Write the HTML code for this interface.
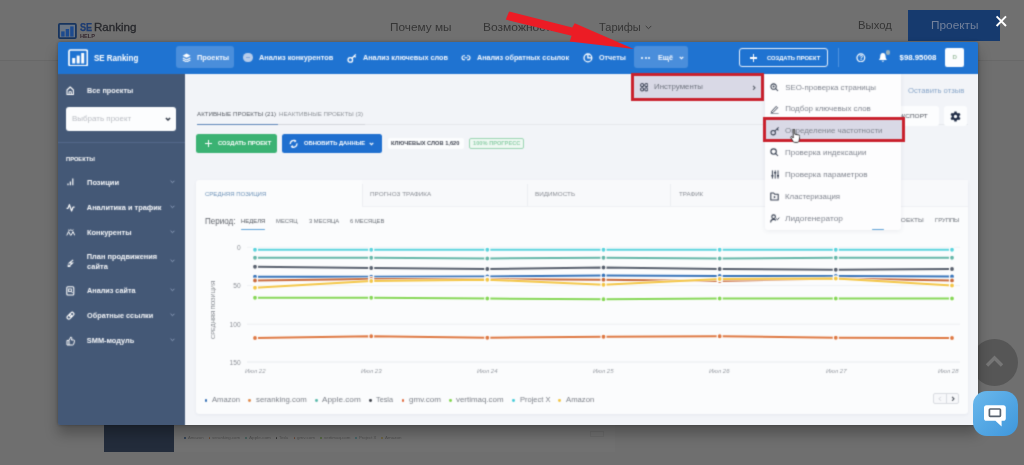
<!DOCTYPE html><html lang="ru"><head><meta charset="utf-8"><title>SE Ranking Help</title><style>
html,body{margin:0;padding:0;}
body{width:1024px;height:465px;overflow:hidden;position:relative;background:#6f6f6f;font-family:"Liberation Sans",sans-serif;}
div,span.t,svg{position:absolute;}
span.t{white-space:nowrap;display:block;}
#m{overflow:hidden;border-radius:2px;}
#mw{filter:url(#soft);}
</style></head><body><svg width="0" height="0" style="left:0;top:0;"><filter id="soft" x="0" y="0" width="100%" height="100%" color-interpolation-filters="sRGB"><feConvolveMatrix order="3" kernelMatrix="0.03 0.11 0.03 0.11 0.44 0.11 0.03 0.11 0.03" edgeMode="duplicate" preserveAlpha="false"/></filter></svg><div style="left:0.00px;top:0.00px;width:1024.00px;height:60.00px;background:#707070;"></div><div style="left:0.00px;top:60.00px;width:1024.00px;height:1.00px;background:#686868;"></div><svg style="left:58.20px;top:22.70px;" width="18.80" height="16.00" viewBox="0 0 18.8 16"><rect x="0.9" y="0.9" width="17" height="14.2" rx="1" fill="#6b7684" stroke="#17345e" stroke-width="1.8"/><rect x="3.2" y="8.4" width="3.4" height="5.2" fill="#1c4a8e"/><rect x="7.7" y="6" width="3.4" height="7.6" fill="#1c4a8e"/><rect x="12.2" y="3.4" width="3.4" height="10.2" fill="#1c4a8e"/></svg><span class="t" style="font-size:10.1px;line-height:11.282px;color:#1c3c72;top:21.95px;font-weight:700;left:80.00px;transform:scaleX(0.9058);transform-origin:0 50%;-webkit-text-stroke:0.25px #1c3c72;">SE</span><span class="t" style="font-size:10.1px;line-height:11.282px;color:#27282c;top:21.95px;left:94.40px;transform:scaleX(1.1472);transform-origin:0 50%;-webkit-text-stroke:0.3px #27282c;">Ranking</span><span class="t" style="font-size:5.4px;line-height:6.032px;color:#33272f;top:33.01px;font-weight:700;left:80.30px;transform:scaleX(1.0493);transform-origin:0 50%;">HELP</span><span class="t" style="font-size:11.6px;line-height:12.957px;color:#353535;top:20.68px;left:390.00px;transform:scaleX(1.0176);transform-origin:0 50%;">Почему мы</span><span class="t" style="font-size:11.6px;line-height:12.957px;color:#353535;top:20.68px;left:482.50px;transform:scaleX(1.0370);transform-origin:0 50%;">Возможности</span><span class="t" style="font-size:11.6px;line-height:12.957px;color:#353535;top:20.68px;left:598.60px;transform:scaleX(0.9518);transform-origin:0 50%;">Тарифы</span><svg style="left:645.00px;top:24.50px;" width="7.00" height="5.00" viewBox="0 0 7 5"><path d="M0.7 0.9 L3.5 3.7 L6.3 0.9" fill="none" stroke="#3c3c3c" stroke-width="1"/></svg><span class="t" style="font-size:11.6px;line-height:12.957px;color:#353535;top:19.28px;left:858.00px;transform:scaleX(0.9740);transform-origin:0 50%;">Выход</span><div style="left:908.00px;top:10.00px;width:92.00px;height:30.60px;background:#163a6e;"></div><span class="t" style="font-size:11.6px;line-height:12.957px;color:#73819b;top:19.28px;left:930.50px;transform:scaleX(1.0208);transform-origin:0 50%;">Проекты</span><div style="left:104.00px;top:418.00px;width:70.00px;height:33.70px;background:#232c3b;"></div><div style="left:174.00px;top:418.00px;width:441.00px;height:33.70px;background:#717171;"></div><div style="left:184.40px;top:437.30px;width:1.60px;height:1.60px;background:#23374f;border-radius:1px;"></div><span class="t" style="font-size:3.6px;line-height:4.021px;color:#505050;top:436.12px;left:187.80px;transform:scaleX(1.1754);transform-origin:0 50%;">Amazon</span><div style="left:208.50px;top:437.30px;width:1.60px;height:1.60px;background:#6b4a33;border-radius:1px;"></div><span class="t" style="font-size:3.6px;line-height:4.021px;color:#505050;top:436.12px;left:211.90px;transform:scaleX(1.2021);transform-origin:0 50%;">seranking.com</span><div style="left:245.20px;top:437.30px;width:1.60px;height:1.60px;background:#3d5c59;border-radius:1px;"></div><span class="t" style="font-size:3.6px;line-height:4.021px;color:#505050;top:436.12px;left:248.60px;transform:scaleX(1.2953);transform-origin:0 50%;">Apple.com</span><div style="left:275.80px;top:437.30px;width:1.60px;height:1.60px;background:#333;border-radius:1px;"></div><span class="t" style="font-size:3.6px;line-height:4.021px;color:#505050;top:436.12px;left:279.20px;transform:scaleX(1.0965);transform-origin:0 50%;">Tesla</span><div style="left:293.60px;top:437.30px;width:1.60px;height:1.60px;background:#6b4433;border-radius:1px;"></div><span class="t" style="font-size:3.6px;line-height:4.021px;color:#505050;top:436.12px;left:297.00px;transform:scaleX(1.2576);transform-origin:0 50%;">gmv.com</span><div style="left:320.20px;top:437.30px;width:1.60px;height:1.60px;background:#4d6636;border-radius:1px;"></div><span class="t" style="font-size:3.6px;line-height:4.021px;color:#505050;top:436.12px;left:323.60px;transform:scaleX(1.2235);transform-origin:0 50%;">vertimaq.com</span><div style="left:355.20px;top:437.30px;width:1.60px;height:1.60px;background:#3a6166;border-radius:1px;"></div><span class="t" style="font-size:3.6px;line-height:4.021px;color:#505050;top:436.12px;left:358.60px;transform:scaleX(1.1923);transform-origin:0 50%;">Project X</span><div style="left:381.20px;top:437.30px;width:1.60px;height:1.60px;background:#6b6038;border-radius:1px;"></div><span class="t" style="font-size:3.6px;line-height:4.021px;color:#505050;top:436.12px;left:384.60px;transform:scaleX(1.2436);transform-origin:0 50%;">Amazon</span><div style="left:590.00px;top:431.00px;width:14.00px;height:6.00px;border:1px solid #666;box-sizing:border-box;opacity:.6;"></div><div style="left:971.00px;top:338.50px;width:47.00px;height:47.00px;background:#565656;border-radius:50%;"></div><svg style="left:983.00px;top:353.00px;" width="23.00" height="16.00" viewBox="0 0 23 16"><path d="M4 12.5 L11.5 5 L19 12.5" fill="none" stroke="#767676" stroke-width="3.4"/></svg><div id="sh" style="left:58px;top:41.5px;width:920px;height:383px;box-shadow:0 9px 13px rgba(0,0,0,.27),0 0 3px rgba(0,0,0,.3);border-radius:2px;"></div><div id="m" style="left:58px;top:41.5px;width:920px;height:383px;"><div id="mw" style="left:0;top:0;width:920px;height:383px;"><div style="left:0.00px;top:-0.50px;width:921.00px;height:33.00px;background:#1f73d1;"></div><div style="left:0.00px;top:32.10px;width:127.00px;height:351.40px;background:#445876;"></div><div style="left:127.00px;top:32.10px;width:794.00px;height:351.40px;background:#f2f4f8;"></div><svg style="left:10.00px;top:7.10px;" width="20.40" height="17.80" viewBox="0 0 20.4 17.8"><rect x="1" y="1" width="18.4" height="15.8" rx="1.5" fill="none" stroke="#fff" stroke-width="1.7"/><rect x="4.2" y="9" width="3" height="5.5" fill="#fff"/><rect x="8.7" y="6.6" width="3" height="7.9" fill="#fff"/><rect x="13.2" y="4" width="3" height="10.5" fill="#fff"/></svg><span class="t" style="font-size:8.6px;line-height:9.606px;color:#fff;top:12.41px;font-weight:700;left:35.80px;transform:scaleX(0.9274);transform-origin:0 50%;">SE Ranking</span><div style="left:118.30px;top:4.90px;width:58.20px;height:21.50px;background:#4a8edb;border-radius:3px;"></div><svg style="left:123.60px;top:11.50px;" width="9.20" height="9.40" viewBox="0 0 9.2 9.4"><path d="M4.6 0.6 L8.6 2.7 L4.6 4.8 L0.6 2.7 Z" fill="#fff"/><path d="M0.8 4.9 L4.6 6.9 L8.4 4.9 M0.8 6.9 L4.6 8.9 L8.4 6.9" fill="none" stroke="#fff" stroke-width="1.1"/></svg><span class="t" style="font-size:7.4px;line-height:8.266px;color:#f3f7fd;top:12.27px;font-weight:700;left:139.00px;">Проекты</span><div style="left:185.30px;top:11.30px;width:9.70px;height:9.70px;background:#b7cdeb;border-radius:50%;"></div><div style="left:187.80px;top:15.40px;width:4.70px;height:1.40px;background:#7fa6dc;border-radius:1px;"></div><span class="t" style="font-size:7.4px;line-height:8.266px;color:#f3f7fd;top:12.27px;font-weight:700;left:200.90px;transform:scaleX(0.9914);transform-origin:0 50%;">Анализ конкурентов</span><svg style="left:288.80px;top:11.10px;" width="10.00" height="10.20" viewBox="0 0 10 10.2"><circle cx="3.3" cy="6.9" r="2.3" fill="none" stroke="#fff" stroke-width="1.3"/><path d="M5 5.2 L8.8 1.4 M7.2 2.9 L8.7 4.3" fill="none" stroke="#fff" stroke-width="1.3"/></svg><span class="t" style="font-size:7.4px;line-height:8.266px;color:#f3f7fd;top:12.27px;font-weight:700;left:304.50px;transform:scaleX(0.9818);transform-origin:0 50%;">Анализ ключевых слов</span><svg style="left:402.80px;top:12.50px;" width="10.00" height="7.40" viewBox="0 0 10 7.4"><path d="M4 1.7 H3 A2 2 0 0 0 3 5.7 H4 M6 1.7 H7 A2 2 0 0 1 7 5.7 H6 M3.4 3.7 H6.6" fill="none" stroke="#fff" stroke-width="1.1"/></svg><span class="t" style="font-size:7.4px;line-height:8.266px;color:#f3f7fd;top:12.27px;font-weight:700;left:418.80px;transform:scaleX(0.9737);transform-origin:0 50%;">Анализ обратных ссылок</span><svg style="left:525.00px;top:11.30px;" width="9.80" height="9.80" viewBox="0 0 9.8 9.8"><circle cx="4.9" cy="4.9" r="3.9" fill="none" stroke="#fff" stroke-width="1.3"/><path d="M4.9 1.6 V4.9 H8.3" fill="none" stroke="#fff" stroke-width="1.3"/></svg><span class="t" style="font-size:7.4px;line-height:8.266px;color:#f3f7fd;top:12.27px;font-weight:700;left:540.80px;transform:scaleX(0.9707);transform-origin:0 50%;">Отчеты</span><div style="left:575.80px;top:4.90px;width:54.20px;height:21.50px;background:#4a8edb;border-radius:3px;"></div><div style="left:583.20px;top:15.30px;width:2.10px;height:2.10px;background:#fff;border-radius:50%;"></div><div style="left:586.50px;top:15.30px;width:2.10px;height:2.10px;background:#fff;border-radius:50%;"></div><div style="left:589.80px;top:15.30px;width:2.10px;height:2.10px;background:#fff;border-radius:50%;"></div><span class="t" style="font-size:7.4px;line-height:8.266px;color:#f3f7fd;top:12.27px;font-weight:700;left:600.00px;transform:scaleX(0.9816);transform-origin:0 50%;">Ещё</span><svg style="left:620.50px;top:14.50px;" width="5.00" height="4.00" viewBox="0 0 5 4"><path d="M0.7 0.9 L2.5 2.7 L4.3 0.9" fill="none" stroke="#fff" stroke-width="1.1"/></svg><div style="left:681.30px;top:6.60px;width:88.40px;height:19.00px;border:1.2px solid #e8f0fb;border-radius:3px;box-sizing:border-box;"></div><div style="left:691.50px;top:15.70px;width:7.80px;height:1.40px;background:#fff;"></div><div style="left:694.70px;top:12.50px;width:1.40px;height:7.80px;background:#fff;"></div><span class="t" style="font-size:6.2px;line-height:6.925px;color:#fff;top:13.02px;font-weight:700;left:708.60px;transform:scaleX(0.9387);transform-origin:0 50%;">СОЗДАТЬ ПРОЕКТ</span><div style="left:780.30px;top:6.80px;width:0.90px;height:18.70px;background:#4f93df;"></div><svg style="left:798.30px;top:11.30px;" width="9.70" height="9.70" viewBox="0 0 9.7 9.7"><circle cx="4.85" cy="4.85" r="3.9" fill="none" stroke="#fff" stroke-width="1.2"/></svg><span class="t" style="font-size:6.4px;line-height:7.149px;color:#fff;top:12.71px;font-weight:700;left:801.20px;">?</span><svg style="left:820.20px;top:10.80px;" width="9.80" height="10.70" viewBox="0 0 9.8 10.7"><path d="M4.9 1 C2.9 1 2.2 2.7 2.2 4.4 C2.2 6.4 1.3 7.2 0.9 7.9 H8.9 C8.5 7.2 7.6 6.4 7.6 4.4 C7.6 2.7 6.9 1 4.9 1 Z" fill="#fff"/><path d="M3.6 8.8 A1.4 1.4 0 0 0 6.2 8.8 Z" fill="#fff"/></svg><div style="left:827.80px;top:8.70px;width:4.60px;height:4.60px;background:#9db3bb;border-radius:50%;"></div><span class="t" style="font-size:7.8px;line-height:8.713px;color:#fff;top:12.05px;font-weight:700;left:841.60px;">$98.95008</span><div style="left:887.40px;top:6.70px;width:18.60px;height:18.50px;background:#fbfdff;border-radius:2px;"></div><span class="t" style="font-size:6.2px;line-height:6.925px;color:#9fbfa3;top:12.82px;font-weight:700;left:894.47px;">D</span><svg style="left:8.20px;top:44.10px;" width="8.40" height="9.40" viewBox="0 0 8.4 9.4"><path d="M1 4 L4.2 1 L7.4 4 V8.6 H1 Z" fill="none" stroke="#fff" stroke-width="1.1" stroke-linejoin="round"/><path d="M3.1 8.6 V5.7 H5.3 V8.6" fill="none" stroke="#fff" stroke-width="1"/></svg><span class="t" style="font-size:7.4px;line-height:8.266px;color:#f4f6f9;top:45.53px;font-weight:700;left:28.80px;transform:scaleX(0.9859);transform-origin:0 50%;">Все проекты</span><div style="left:8.10px;top:65.20px;width:110.30px;height:24.70px;background:#fcfdfe;border-radius:3px;"></div><span class="t" style="font-size:7.8px;line-height:8.713px;color:#b9bcc2;top:73.41px;left:13.60px;transform:scaleX(1.0229);transform-origin:0 50%;">Выбрать проект</span><svg style="left:107.00px;top:75.80px;" width="6.00" height="4.40" viewBox="0 0 6 4.4"><path d="M0.9 0.9 L3 3 L5.1 0.9" fill="none" stroke="#2d3543" stroke-width="1.4"/></svg><div style="left:0.00px;top:100.80px;width:127.00px;height:0.80px;background:#53678a;"></div><span class="t" style="font-size:5.9px;line-height:6.59px;color:#fff;top:114.38px;font-weight:700;left:7.70px;transform:scaleX(0.9758);transform-origin:0 50%;">ПРОЕКТЫ</span><span class="t" style="font-size:7.4px;line-height:8.266px;color:#f4f6f9;top:137.13px;font-weight:700;left:28.80px;transform:scaleX(1.0134);transform-origin:0 50%;">Позиции</span><span class="t" style="font-size:7.4px;line-height:8.266px;color:#f4f6f9;top:162.43px;font-weight:700;left:28.80px;">Аналитика и трафик</span><span class="t" style="font-size:7.4px;line-height:8.266px;color:#f4f6f9;top:187.63px;font-weight:700;left:28.80px;transform:scaleX(1.0060);transform-origin:0 50%;">Конкуренты</span><span class="t" style="font-size:7.4px;line-height:8.266px;color:#f4f6f9;top:211.53px;font-weight:700;left:28.80px;">План продвижения</span><span class="t" style="font-size:7.4px;line-height:8.266px;color:#f4f6f9;top:245.63px;font-weight:700;left:28.80px;transform:scaleX(0.9824);transform-origin:0 50%;">Анализ сайта</span><span class="t" style="font-size:7.4px;line-height:8.266px;color:#f4f6f9;top:270.63px;font-weight:700;left:28.80px;transform:scaleX(0.9885);transform-origin:0 50%;">Обратные ссылки</span><span class="t" style="font-size:7.4px;line-height:8.266px;color:#f4f6f9;top:295.63px;font-weight:700;left:28.80px;">SMM-модуль</span><span class="t" style="font-size:7.4px;line-height:8.266px;color:#f4f6f9;top:221.23px;font-weight:700;left:28.80px;transform:scaleX(1.0100);transform-origin:0 50%;">сайта</span><svg style="left:112.20px;top:138.00px;" width="5.00" height="4.00" viewBox="0 0 5 4"><path d="M0.6 0.8 L2.5 2.7 L4.4 0.8" fill="none" stroke="#8fa0bd" stroke-width="1"/></svg><svg style="left:112.20px;top:163.00px;" width="5.00" height="4.00" viewBox="0 0 5 4"><path d="M0.6 0.8 L2.5 2.7 L4.4 0.8" fill="none" stroke="#8fa0bd" stroke-width="1"/></svg><svg style="left:112.20px;top:188.20px;" width="5.00" height="4.00" viewBox="0 0 5 4"><path d="M0.6 0.8 L2.5 2.7 L4.4 0.8" fill="none" stroke="#8fa0bd" stroke-width="1"/></svg><svg style="left:112.20px;top:217.40px;" width="5.00" height="4.00" viewBox="0 0 5 4"><path d="M0.6 0.8 L2.5 2.7 L4.4 0.8" fill="none" stroke="#8fa0bd" stroke-width="1"/></svg><svg style="left:112.20px;top:246.40px;" width="5.00" height="4.00" viewBox="0 0 5 4"><path d="M0.6 0.8 L2.5 2.7 L4.4 0.8" fill="none" stroke="#8fa0bd" stroke-width="1"/></svg><svg style="left:112.20px;top:271.40px;" width="5.00" height="4.00" viewBox="0 0 5 4"><path d="M0.6 0.8 L2.5 2.7 L4.4 0.8" fill="none" stroke="#8fa0bd" stroke-width="1"/></svg><svg style="left:112.20px;top:296.40px;" width="5.00" height="4.00" viewBox="0 0 5 4"><path d="M0.6 0.8 L2.5 2.7 L4.4 0.8" fill="none" stroke="#8fa0bd" stroke-width="1"/></svg><svg style="left:8.80px;top:136.90px;" width="6.80" height="7.40" viewBox="0 0 6.8 7.4"><path d="M1 7.2 V5.6 M3.4 7.2 V3.4 M5.8 7.2 V0.6" fill="none" stroke="#fff" stroke-width="1.2"/></svg><svg style="left:8.00px;top:161.30px;" width="9.20" height="9.40" viewBox="0 0 9.2 9.4"><path d="M0.6 5.4 H2 L3.4 1.6 L5.6 8 L7 4.2 H8.6" fill="none" stroke="#fff" stroke-width="1.2" stroke-linejoin="round"/></svg><svg style="left:7.80px;top:187.90px;" width="9.60" height="7.00" viewBox="0 0 9.6 7"><path d="M0.8 6.4 L2.6 2.6 L4.6 6.4 M5 6.4 L7 2.6 L8.8 6.4 M2.2 0.8 C3 1.6 3.8 1.6 4.8 0.8 C5.8 1.6 6.6 1.6 7.4 0.8" fill="none" stroke="#fff" stroke-width="1"/></svg><svg style="left:8.80px;top:217.10px;" width="7.60" height="8.80" viewBox="0 0 7.6 8.8"><path d="M6.2 0.8 L2.2 4 H5.6 L1.6 7.6 M1.2 5.4 V8 H3.8" fill="none" stroke="#fff" stroke-width="1.05"/></svg><svg style="left:8.20px;top:244.30px;" width="8.60" height="9.80" viewBox="0 0 8.6 9.8"><rect x="0.8" y="0.8" width="7" height="8.2" rx="1" fill="none" stroke="#fff" stroke-width="1.1"/><rect x="2.6" y="3" width="2.8" height="2.6" fill="none" stroke="#fff" stroke-width="0.9"/><path d="M5.4 5.6 L6.6 7" stroke="#fff" stroke-width="0.9"/></svg><svg style="left:8.00px;top:269.50px;" width="9.00" height="9.40" viewBox="0 0 9 9.4"><g transform="rotate(-45 4.5 4.7)" fill="none" stroke="#fff" stroke-width="1.15"><rect x="0.4" y="3" width="5" height="3.4" rx="1.7"/><rect x="3.6" y="3" width="5" height="3.4" rx="1.7"/></g></svg><svg style="left:7.80px;top:294.10px;" width="9.60" height="10.00" viewBox="0 0 9.6 10"><path d="M3 4.4 L4.8 1 C5.8 1 6 1.9 5.7 3 L5.4 4 H7.6 C8.4 4 8.7 4.6 8.5 5.2 L7.7 8.2 C7.6 8.7 7.2 9 6.7 9 H3 M3 4.4 V9 H1 V4.4 Z" fill="none" stroke="#fff" stroke-width="1" stroke-linejoin="round"/></svg><span class="t" style="font-size:5.6px;line-height:6.255px;color:#585c64;top:69.45px;left:138.90px;transform:scaleX(1.1083);transform-origin:0 50%;">АКТИВНЫЕ ПРОЕКТЫ (21)</span><span class="t" style="font-size:5.6px;line-height:6.255px;color:#8e9298;top:69.45px;left:221.00px;transform:scaleX(1.1062);transform-origin:0 50%;">НЕАКТИВНЫЕ ПРОЕКТЫ (3)</span><div style="left:138.80px;top:82.70px;width:771.20px;height:0.80px;background:#e6e8ec;"></div><div style="left:138.80px;top:82.70px;width:168.20px;height:0.80px;background:#d3d6db;"></div><div style="left:138.80px;top:82.40px;width:81.20px;height:1.20px;background:#5d86b8;"></div><div style="left:138.30px;top:92.10px;width:80.70px;height:19.50px;background:#3bb273;border-radius:2.5px;"></div><div style="left:147.20px;top:101.20px;width:6.80px;height:1.30px;background:#fff;"></div><div style="left:149.95px;top:98.50px;width:1.30px;height:6.80px;background:#fff;"></div><span class="t" style="font-size:6.2px;line-height:6.925px;color:#fff;top:98.52px;font-weight:700;left:159.70px;transform:scaleX(0.9405);transform-origin:0 50%;">СОЗДАТЬ ПРОЕКТ</span><div style="left:224.20px;top:92.10px;width:100.10px;height:19.50px;background:#1f6fcf;border-radius:2.5px;"></div><svg style="left:231.40px;top:97.10px;" width="9.20" height="9.60" viewBox="0 0 9.2 9.6"><path d="M1.3 5.2 A3.4 3.4 0 0 1 6.6 2 M7.9 4.4 A3.4 3.4 0 0 1 2.6 7.6" fill="none" stroke="#fff" stroke-width="1.3"/><path d="M5.2 0.4 L7.6 2 L5.6 3.6 Z M4 9.2 L1.6 7.6 L3.6 6 Z" fill="#fff"/></svg><span class="t" style="font-size:6.2px;line-height:6.925px;color:#fff;top:98.52px;font-weight:700;left:245.70px;transform:scaleX(0.9357);transform-origin:0 50%;">ОБНОВИТЬ ДАННЫЕ</span><svg style="left:311.40px;top:100.10px;" width="5.00" height="4.00" viewBox="0 0 5 4"><path d="M0.7 0.9 L2.5 2.7 L4.3 0.9" fill="none" stroke="#fff" stroke-width="1.1"/></svg><div style="left:330.00px;top:96.50px;width:75.80px;height:10.80px;background:#fcfdfe;border-radius:2px;"></div><span class="t" style="font-size:5.4px;line-height:6.032px;color:#3f4450;top:98.96px;font-weight:700;left:333.40px;transform:scaleX(1.0551);transform-origin:0 50%;">КЛЮЧЕВЫХ СЛОВ 1,620</span><div style="left:410.80px;top:96.50px;width:55.00px;height:10.80px;background:#eef8f2;border:1px solid #9bd5b3;border-radius:2px;box-sizing:border-box;"></div><span class="t" style="font-size:5.4px;line-height:6.032px;color:#8fcfa9;top:98.96px;font-weight:700;left:414.60px;transform:scaleX(1.0552);transform-origin:0 50%;">100% ПРОГРЕСС</span><span class="t" style="font-size:7.6px;line-height:8.489px;color:#88a6c9;top:45.12px;left:849.50px;transform:scaleX(1.0134);transform-origin:0 50%;">Оставить отзыв</span><div style="left:822.00px;top:64.50px;width:58.80px;height:20.00px;background:#fcfdfe;border-radius:3px;"></div><span class="t" style="font-size:5.6px;line-height:6.255px;color:#4f545d;top:71.65px;left:838.60px;transform:scaleX(1.1534);transform-origin:0 50%;">ЭКСПОРТ</span><div style="left:885.80px;top:64.50px;width:23.70px;height:20.00px;background:#fcfdfe;border-radius:3px;"></div><svg style="left:892.20px;top:69.10px;" width="11.00" height="11.00" viewBox="0 0 11 11"><g transform="translate(5.5 5.5)"><rect x="-1.25" y="-5.1" width="2.5" height="10.2" rx="0.5" transform="rotate(0)" fill="#1f2b45"/><rect x="-1.25" y="-5.1" width="2.5" height="10.2" rx="0.5" transform="rotate(60)" fill="#1f2b45"/><rect x="-1.25" y="-5.1" width="2.5" height="10.2" rx="0.5" transform="rotate(120)" fill="#1f2b45"/><circle r="3.7" fill="#1f2b45"/><circle r="1.7" fill="#fcfdfe"/></g></svg><div style="left:138.30px;top:138.50px;width:771.30px;height:234.40px;background:#fbfcfd;border-radius:3px;box-shadow:0 1px 3px rgba(120,130,150,.10);"></div><div style="left:304.00px;top:138.90px;width:605.60px;height:26.20px;background:#f8f9fb;border-bottom:1px solid #eff1f4;box-sizing:border-box;"></div><div style="left:303.60px;top:142.50px;width:0.80px;height:22.00px;background:#eceef2;"></div><div style="left:469.00px;top:142.50px;width:0.80px;height:22.00px;background:#eceef2;"></div><div style="left:612.20px;top:142.50px;width:0.80px;height:22.00px;background:#eceef2;"></div><span class="t" style="font-size:5.6px;line-height:6.255px;color:#6d92b8;top:149.05px;left:146.80px;transform:scaleX(1.0766);transform-origin:0 50%;">СРЕДНЯЯ ПОЗИЦИЯ</span><span class="t" style="font-size:5.6px;line-height:6.255px;color:#8a8e95;top:149.05px;left:311.80px;transform:scaleX(1.1368);transform-origin:0 50%;">ПРОГНОЗ ТРАФИКА</span><span class="t" style="font-size:5.6px;line-height:6.255px;color:#8a8e95;top:149.05px;left:477.00px;transform:scaleX(1.1291);transform-origin:0 50%;">ВИДИМОСТЬ</span><span class="t" style="font-size:5.6px;line-height:6.255px;color:#8a8e95;top:149.05px;left:621.00px;transform:scaleX(1.1071);transform-origin:0 50%;">ТРАФИК</span><span class="t" style="font-size:8.2px;line-height:9.159px;color:#5b5f66;top:175.09px;left:146.80px;transform:scaleX(0.9806);transform-origin:0 50%;">Период:</span><span class="t" style="font-size:5.4px;line-height:6.032px;color:#50555e;top:176.96px;left:182.80px;transform:scaleX(1.0960);transform-origin:0 50%;">НЕДЕЛЯ</span><span class="t" style="font-size:5.4px;line-height:6.032px;color:#6d727a;top:176.96px;left:218.30px;transform:scaleX(1.0868);transform-origin:0 50%;">МЕСЯЦ</span><span class="t" style="font-size:5.4px;line-height:6.032px;color:#6d727a;top:176.96px;left:250.80px;transform:scaleX(1.0804);transform-origin:0 50%;">3 МЕСЯЦА</span><span class="t" style="font-size:5.4px;line-height:6.032px;color:#6d727a;top:176.96px;left:291.90px;transform:scaleX(1.0873);transform-origin:0 50%;">6 МЕСЯЦЕВ</span><div style="left:182.60px;top:187.50px;width:24.70px;height:1.40px;background:#62a4d8;border-radius:1px;"></div><span class="t" style="font-size:5.4px;line-height:6.032px;color:#6d727a;top:175.86px;left:834.00px;transform:scaleX(1.2064);transform-origin:0 50%;">ПРОЕКТЫ</span><span class="t" style="font-size:5.4px;line-height:6.032px;color:#6d727a;top:175.86px;left:877.00px;transform:scaleX(1.0876);transform-origin:0 50%;">ГРУППЫ</span><span class="t" style="font-size:6.6px;line-height:7.372px;color:#8b8f96;top:202.30px;left:178.93px;">0</span><span class="t" style="font-size:6.6px;line-height:7.372px;color:#8b8f96;top:240.60px;left:175.26px;">50</span><span class="t" style="font-size:6.6px;line-height:7.372px;color:#8b8f96;top:279.30px;left:171.58px;">100</span><span class="t" style="font-size:6.6px;line-height:7.372px;color:#8b8f96;top:317.90px;left:171.58px;">150</span><span class="t" style="font-size:5.2px;line-height:5.808px;color:#7d8188;top:265.17px;left:128.79px;transform:rotate(-90deg) scaleX(1.0982);transform-origin:50% 50%;">СРЕДНЯЯ ПОЗИЦИЯ</span><svg style="left:138.00px;top:194.50px;" width="772.00" height="136.00" viewBox="196 236 772 136"><line x1="247" y1="247.3" x2="960" y2="247.3" stroke="#f2f3f6" stroke-width="1"/><line x1="247" y1="285.6" x2="960" y2="285.6" stroke="#f0f2f5" stroke-width="1"/><line x1="247" y1="324.2" x2="960" y2="324.2" stroke="#eceef1" stroke-width="1"/><line x1="247" y1="362" x2="960" y2="362" stroke="#e8eaee" stroke-width="1"/><polyline points="255,276.75 371.2,276.75 487.3,276.5 603.5,275.5 719.7,276 835.8,276 952,276.5" fill="none" stroke="#fff" stroke-width="3.6" stroke-opacity=".8"/><polyline points="255,276.75 371.2,276.75 487.3,276.5 603.5,275.5 719.7,276 835.8,276 952,276.5" fill="none" stroke="#3471b8" stroke-width="2"/><polyline points="255,338 371.2,336.25 487.3,337.75 603.5,336.75 719.7,336.25 835.8,337.75 952,338" fill="none" stroke="#fff" stroke-width="3.6" stroke-opacity=".8"/><polyline points="255,338 371.2,336.25 487.3,337.75 603.5,336.75 719.7,336.25 835.8,337.75 952,338" fill="none" stroke="#dd7640" stroke-width="2"/><polyline points="255,257.75 371.2,257.75 487.3,258.5 603.5,257.75 719.7,258.5 835.8,257.75 952,257.75" fill="none" stroke="#fff" stroke-width="3.6" stroke-opacity=".8"/><polyline points="255,257.75 371.2,257.75 487.3,258.5 603.5,257.75 719.7,258.5 835.8,257.75 952,257.75" fill="none" stroke="#63b5a7" stroke-width="2"/><polyline points="255,266.75 371.2,268 487.3,269 603.5,267.5 719.7,269 835.8,269.75 952,269" fill="none" stroke="#fff" stroke-width="3.6" stroke-opacity=".8"/><polyline points="255,266.75 371.2,268 487.3,269 603.5,267.5 719.7,269 835.8,269.75 952,269" fill="none" stroke="#565e6c" stroke-width="2"/><polyline points="255,280.5 371.2,279 487.3,279 603.5,279.75 719.7,281 835.8,278.5 952,280.5" fill="none" stroke="#fff" stroke-width="3.6" stroke-opacity=".8"/><polyline points="255,280.5 371.2,279 487.3,279 603.5,279.75 719.7,281 835.8,278.5 952,280.5" fill="none" stroke="#c7683a" stroke-width="2"/><polyline points="255,297.75 371.2,297.75 487.3,298.5 603.5,299.25 719.7,298.5 835.8,298.5 952,298.5" fill="none" stroke="#fff" stroke-width="3.6" stroke-opacity=".8"/><polyline points="255,297.75 371.2,297.75 487.3,298.5 603.5,299.25 719.7,298.5 835.8,298.5 952,298.5" fill="none" stroke="#84d654" stroke-width="2"/><polyline points="255,249.75 371.2,249.75 487.3,249.75 603.5,249.75 719.7,249.75 835.8,249.75 952,249.75" fill="none" stroke="#fff" stroke-width="3.6" stroke-opacity=".8"/><polyline points="255,249.75 371.2,249.75 487.3,249.75 603.5,249.75 719.7,249.75 835.8,249.75 952,249.75" fill="none" stroke="#58d2dc" stroke-width="2"/><polyline points="255,287.75 371.2,281 487.3,279.75 603.5,284.75 719.7,279 835.8,278.5 952,285.5" fill="none" stroke="#fff" stroke-width="3.6" stroke-opacity=".8"/><polyline points="255,287.75 371.2,281 487.3,279.75 603.5,284.75 719.7,279 835.8,278.5 952,285.5" fill="none" stroke="#f3c544" stroke-width="2"/><circle cx="255" cy="276.75" r="2.5" fill="#3471b8" stroke="#fff" stroke-width="1.2"/><circle cx="371.2" cy="276.75" r="2.5" fill="#3471b8" stroke="#fff" stroke-width="1.2"/><circle cx="487.3" cy="276.5" r="2.5" fill="#3471b8" stroke="#fff" stroke-width="1.2"/><circle cx="603.5" cy="275.5" r="2.5" fill="#3471b8" stroke="#fff" stroke-width="1.2"/><circle cx="719.7" cy="276" r="2.5" fill="#3471b8" stroke="#fff" stroke-width="1.2"/><circle cx="835.8" cy="276" r="2.5" fill="#3471b8" stroke="#fff" stroke-width="1.2"/><circle cx="952" cy="276.5" r="2.5" fill="#3471b8" stroke="#fff" stroke-width="1.2"/><circle cx="255" cy="338" r="2.5" fill="#dd7640" stroke="#fff" stroke-width="1.2"/><circle cx="371.2" cy="336.25" r="2.5" fill="#dd7640" stroke="#fff" stroke-width="1.2"/><circle cx="487.3" cy="337.75" r="2.5" fill="#dd7640" stroke="#fff" stroke-width="1.2"/><circle cx="603.5" cy="336.75" r="2.5" fill="#dd7640" stroke="#fff" stroke-width="1.2"/><circle cx="719.7" cy="336.25" r="2.5" fill="#dd7640" stroke="#fff" stroke-width="1.2"/><circle cx="835.8" cy="337.75" r="2.5" fill="#dd7640" stroke="#fff" stroke-width="1.2"/><circle cx="952" cy="338" r="2.5" fill="#dd7640" stroke="#fff" stroke-width="1.2"/><circle cx="255" cy="257.75" r="2.5" fill="#63b5a7" stroke="#fff" stroke-width="1.2"/><circle cx="371.2" cy="257.75" r="2.5" fill="#63b5a7" stroke="#fff" stroke-width="1.2"/><circle cx="487.3" cy="258.5" r="2.5" fill="#63b5a7" stroke="#fff" stroke-width="1.2"/><circle cx="603.5" cy="257.75" r="2.5" fill="#63b5a7" stroke="#fff" stroke-width="1.2"/><circle cx="719.7" cy="258.5" r="2.5" fill="#63b5a7" stroke="#fff" stroke-width="1.2"/><circle cx="835.8" cy="257.75" r="2.5" fill="#63b5a7" stroke="#fff" stroke-width="1.2"/><circle cx="952" cy="257.75" r="2.5" fill="#63b5a7" stroke="#fff" stroke-width="1.2"/><circle cx="255" cy="266.75" r="2.5" fill="#565e6c" stroke="#fff" stroke-width="1.2"/><circle cx="371.2" cy="268" r="2.5" fill="#565e6c" stroke="#fff" stroke-width="1.2"/><circle cx="487.3" cy="269" r="2.5" fill="#565e6c" stroke="#fff" stroke-width="1.2"/><circle cx="603.5" cy="267.5" r="2.5" fill="#565e6c" stroke="#fff" stroke-width="1.2"/><circle cx="719.7" cy="269" r="2.5" fill="#565e6c" stroke="#fff" stroke-width="1.2"/><circle cx="835.8" cy="269.75" r="2.5" fill="#565e6c" stroke="#fff" stroke-width="1.2"/><circle cx="952" cy="269" r="2.5" fill="#565e6c" stroke="#fff" stroke-width="1.2"/><circle cx="255" cy="280.5" r="2.5" fill="#c7683a" stroke="#fff" stroke-width="1.2"/><circle cx="371.2" cy="279" r="2.5" fill="#c7683a" stroke="#fff" stroke-width="1.2"/><circle cx="487.3" cy="279" r="2.5" fill="#c7683a" stroke="#fff" stroke-width="1.2"/><circle cx="603.5" cy="279.75" r="2.5" fill="#c7683a" stroke="#fff" stroke-width="1.2"/><circle cx="719.7" cy="281" r="2.5" fill="#c7683a" stroke="#fff" stroke-width="1.2"/><circle cx="835.8" cy="278.5" r="2.5" fill="#c7683a" stroke="#fff" stroke-width="1.2"/><circle cx="952" cy="280.5" r="2.5" fill="#c7683a" stroke="#fff" stroke-width="1.2"/><circle cx="255" cy="297.75" r="2.5" fill="#84d654" stroke="#fff" stroke-width="1.2"/><circle cx="371.2" cy="297.75" r="2.5" fill="#84d654" stroke="#fff" stroke-width="1.2"/><circle cx="487.3" cy="298.5" r="2.5" fill="#84d654" stroke="#fff" stroke-width="1.2"/><circle cx="603.5" cy="299.25" r="2.5" fill="#84d654" stroke="#fff" stroke-width="1.2"/><circle cx="719.7" cy="298.5" r="2.5" fill="#84d654" stroke="#fff" stroke-width="1.2"/><circle cx="835.8" cy="298.5" r="2.5" fill="#84d654" stroke="#fff" stroke-width="1.2"/><circle cx="952" cy="298.5" r="2.5" fill="#84d654" stroke="#fff" stroke-width="1.2"/><circle cx="255" cy="249.75" r="2.5" fill="#58d2dc" stroke="#fff" stroke-width="1.2"/><circle cx="371.2" cy="249.75" r="2.5" fill="#58d2dc" stroke="#fff" stroke-width="1.2"/><circle cx="487.3" cy="249.75" r="2.5" fill="#58d2dc" stroke="#fff" stroke-width="1.2"/><circle cx="603.5" cy="249.75" r="2.5" fill="#58d2dc" stroke="#fff" stroke-width="1.2"/><circle cx="719.7" cy="249.75" r="2.5" fill="#58d2dc" stroke="#fff" stroke-width="1.2"/><circle cx="835.8" cy="249.75" r="2.5" fill="#58d2dc" stroke="#fff" stroke-width="1.2"/><circle cx="952" cy="249.75" r="2.5" fill="#58d2dc" stroke="#fff" stroke-width="1.2"/><circle cx="255" cy="287.75" r="2.5" fill="#f3c544" stroke="#fff" stroke-width="1.2"/><circle cx="371.2" cy="281" r="2.5" fill="#f3c544" stroke="#fff" stroke-width="1.2"/><circle cx="487.3" cy="279.75" r="2.5" fill="#f3c544" stroke="#fff" stroke-width="1.2"/><circle cx="603.5" cy="284.75" r="2.5" fill="#f3c544" stroke="#fff" stroke-width="1.2"/><circle cx="719.7" cy="279" r="2.5" fill="#f3c544" stroke="#fff" stroke-width="1.2"/><circle cx="835.8" cy="278.5" r="2.5" fill="#f3c544" stroke="#fff" stroke-width="1.2"/><circle cx="952" cy="285.5" r="2.5" fill="#f3c544" stroke="#fff" stroke-width="1.2"/></svg><span class="t" style="font-size:5.6px;line-height:6.255px;color:#979ba2;top:326.32px;left:186.75px;transform:scaleX(1.0781);transform-origin:0 50%;font-style:italic;">Июл 22</span><span class="t" style="font-size:5.6px;line-height:6.255px;color:#979ba2;top:326.32px;left:302.95px;transform:scaleX(1.0781);transform-origin:0 50%;font-style:italic;">Июл 23</span><span class="t" style="font-size:5.6px;line-height:6.255px;color:#979ba2;top:326.32px;left:419.05px;transform:scaleX(1.0781);transform-origin:0 50%;font-style:italic;">Июл 24</span><span class="t" style="font-size:5.6px;line-height:6.255px;color:#979ba2;top:326.32px;left:535.25px;transform:scaleX(1.0781);transform-origin:0 50%;font-style:italic;">Июл 25</span><span class="t" style="font-size:5.6px;line-height:6.255px;color:#979ba2;top:326.32px;left:651.45px;transform:scaleX(1.0781);transform-origin:0 50%;font-style:italic;">Июл 26</span><span class="t" style="font-size:5.6px;line-height:6.255px;color:#979ba2;top:326.32px;left:767.55px;transform:scaleX(1.0781);transform-origin:0 50%;font-style:italic;">Июл 27</span><span class="t" style="font-size:5.6px;line-height:6.255px;color:#979ba2;top:326.32px;left:880.25px;transform:scaleX(1.0781);transform-origin:0 50%;font-style:italic;">Июл 28</span><div style="left:146.60px;top:357.30px;width:2.80px;height:2.80px;background:#2f6cb3;border-radius:50%;"></div><span class="t" style="font-size:8px;line-height:8.936px;color:#7d8189;top:354.10px;left:154.25px;transform:scaleX(0.9537);transform-origin:0 50%;">Amazon</span><div style="left:190.35px;top:357.30px;width:2.80px;height:2.80px;background:#e08a4a;border-radius:50%;"></div><span class="t" style="font-size:8px;line-height:8.936px;color:#7d8189;top:354.10px;left:198.00px;transform:scaleX(0.9754);transform-origin:0 50%;">seranking.com</span><div style="left:257.35px;top:357.30px;width:2.80px;height:2.80px;background:#58b9aa;border-radius:50%;"></div><span class="t" style="font-size:8px;line-height:8.936px;color:#7d8189;top:354.10px;left:264.25px;transform:scaleX(1.0252);transform-origin:0 50%;">Apple.com</span><div style="left:310.85px;top:357.30px;width:2.80px;height:2.80px;background:#3b3f47;border-radius:50%;"></div><span class="t" style="font-size:8px;line-height:8.936px;color:#7d8189;top:354.10px;left:318.00px;transform:scaleX(0.9097);transform-origin:0 50%;">Tesla</span><div style="left:343.60px;top:357.30px;width:2.80px;height:2.80px;background:#e0693a;border-radius:50%;"></div><span class="t" style="font-size:8px;line-height:8.936px;color:#7d8189;top:354.10px;left:350.50px;transform:scaleX(1.0044);transform-origin:0 50%;">gmv.com</span><div style="left:391.10px;top:357.30px;width:2.80px;height:2.80px;background:#7fd64a;border-radius:50%;"></div><span class="t" style="font-size:8px;line-height:8.936px;color:#7d8189;top:354.10px;left:398.25px;transform:scaleX(0.9893);transform-origin:0 50%;">vertimaq.com</span><div style="left:454.35px;top:357.30px;width:2.80px;height:2.80px;background:#45cbd8;border-radius:50%;"></div><span class="t" style="font-size:8px;line-height:8.936px;color:#7d8189;top:354.10px;left:461.50px;transform:scaleX(0.9394);transform-origin:0 50%;">Project X</span><div style="left:500.10px;top:357.30px;width:2.80px;height:2.80px;background:#f3c544;border-radius:50%;"></div><span class="t" style="font-size:8px;line-height:8.936px;color:#7d8189;top:354.10px;left:507.50px;transform:scaleX(0.9622);transform-origin:0 50%;">Amazon</span><div style="left:875.40px;top:351.30px;width:25.40px;height:11.60px;border:1px solid #d9dce1;border-radius:2px;box-sizing:border-box;background:#f7f8fa;"></div><div style="left:887.80px;top:351.90px;width:0.80px;height:10.40px;background:#d9dce1;"></div><svg style="left:879.60px;top:354.30px;" width="4.00" height="5.60" viewBox="0 0 4 5.6"><path d="M2.9 0.8 L1 2.8 L2.9 4.8" fill="none" stroke="#cfd2d8" stroke-width="1"/></svg><svg style="left:892.60px;top:354.30px;" width="4.00" height="5.60" viewBox="0 0 4 5.6"><path d="M1.1 0.8 L3 2.8 L1.1 4.8" fill="none" stroke="#4a4f58" stroke-width="1.1"/></svg><div style="left:573.00px;top:31.90px;width:132.80px;height:27.60px;background:#d9d9e6;border:3px solid #c9212d;box-sizing:border-box;"></div><svg style="left:581.80px;top:41.50px;" width="8.50" height="8.50" viewBox="0 0 8.5 8.5"><rect x="0.7" y="0.7" width="2.9" height="2.9" rx="0.6" fill="none" stroke="#2b3447" stroke-width="1"/><rect x="0.7" y="4.9" width="2.9" height="2.9" rx="0.6" fill="none" stroke="#2b3447" stroke-width="1"/><rect x="4.9" y="0.7" width="2.9" height="2.9" rx="0.6" fill="none" stroke="#2b3447" stroke-width="1"/><rect x="4.9" y="4.9" width="2.9" height="2.9" rx="0.6" fill="none" stroke="#2b3447" stroke-width="1"/></svg><span class="t" style="font-size:7.9px;line-height:8.824px;color:#6f747f;top:41.95px;left:596.20px;transform:scaleX(0.9959);transform-origin:0 50%;">Инструменты</span><svg style="left:694.00px;top:43.10px;" width="4.00" height="5.60" viewBox="0 0 4 5.6"><path d="M1.1 0.8 L3 2.8 L1.1 4.8" fill="none" stroke="#555b66" stroke-width="1.1"/></svg><div style="left:707.00px;top:32.10px;width:135.50px;height:156.00px;background:#fdfdfe;box-shadow:0 1px 5px rgba(60,70,90,.09);border-radius:0 0 3px 3px;"></div><div style="left:814.40px;top:187.40px;width:12.00px;height:1.40px;background:#62a4d8;border-radius:1px;"></div><div style="left:705.20px;top:75.90px;width:141.80px;height:25.10px;background:#d9d9e6;border:3px solid #c9212d;box-sizing:border-box;"></div><span class="t" style="font-size:7.9px;line-height:8.824px;color:#80858f;top:42.45px;left:727.20px;">SEO-проверка страницы</span><span class="t" style="font-size:7.9px;line-height:8.824px;color:#80858f;top:63.36px;left:727.20px;">Подбор ключевых слов</span><span class="t" style="font-size:7.9px;line-height:8.824px;color:#80858f;top:85.86px;left:727.20px;transform:scaleX(1.0092);transform-origin:0 50%;">Определение частотности</span><span class="t" style="font-size:7.9px;line-height:8.824px;color:#80858f;top:107.46px;left:727.20px;transform:scaleX(1.0122);transform-origin:0 50%;">Проверка индексации</span><span class="t" style="font-size:7.9px;line-height:8.824px;color:#80858f;top:129.16px;left:727.20px;transform:scaleX(1.0184);transform-origin:0 50%;">Проверка параметров</span><span class="t" style="font-size:7.9px;line-height:8.824px;color:#80858f;top:151.16px;left:727.20px;transform:scaleX(0.9918);transform-origin:0 50%;">Кластеризация</span><span class="t" style="font-size:7.9px;line-height:8.824px;color:#80858f;top:173.16px;left:727.20px;transform:scaleX(1.0447);transform-origin:0 50%;">Лидогенератор</span><svg style="left:712.40px;top:41.90px;" width="8.80" height="8.80" viewBox="0 0 8.8 8.8"><circle cx="3.6" cy="3.6" r="2.7" fill="none" stroke="#384152" stroke-width="1.05"/><circle cx="3.6" cy="3.6" r="1" fill="#384152"/><path d="M5.7 5.7 L8 8" stroke="#384152" stroke-width="1.05"/></svg><svg style="left:712.40px;top:63.10px;" width="9.00" height="9.60" viewBox="0 0 9 9.6"><path d="M1.4 6.6 L6.2 1.4 L7.6 2.8 L2.8 7.6 H1.4 Z" fill="none" stroke="#384152" stroke-width="1"/><path d="M0.6 9 H8.6" stroke="#384152" stroke-width="1"/></svg><svg style="left:712.20px;top:84.50px;" width="9.80" height="10.00" viewBox="0 0 9.8 10"><circle cx="3.2" cy="6.7" r="2.2" fill="none" stroke="#384152" stroke-width="1.05"/><path d="M4.9 5 L8.6 1.3 M7 2.9 L8.4 4.3" fill="none" stroke="#384152" stroke-width="1.05"/></svg><svg style="left:712.40px;top:106.70px;" width="8.80" height="8.80" viewBox="0 0 8.8 8.8"><circle cx="3.6" cy="3.6" r="2.7" fill="none" stroke="#384152" stroke-width="1.1"/><path d="M5.7 5.7 L8 8" stroke="#384152" stroke-width="1.05"/></svg><svg style="left:712.60px;top:128.30px;" width="8.40" height="9.00" viewBox="0 0 8.4 9"><path d="M1.4 0.4 V8.6 M4.2 0.4 V8.6 M7 0.4 V8.6" stroke="#384152" stroke-width="1"/><path d="M0.4 5.8 H2.4 M3.2 2.8 H5.2 M6 5.8 H8" stroke="#384152" stroke-width="1.5"/></svg><svg style="left:712.40px;top:150.30px;" width="9.00" height="8.80" viewBox="0 0 9 8.8"><path d="M0.8 1 H3.6 L4.6 2.2 H8.2 V8 H0.8 Z" fill="none" stroke="#384152" stroke-width="1.1" stroke-linejoin="round"/><path d="M3.8 3.8 L5.8 5.1 L3.8 6.4 Z" fill="#384152"/></svg><svg style="left:712.20px;top:172.10px;" width="9.80" height="9.40" viewBox="0 0 9.8 9.4"><circle cx="3.6" cy="2.7" r="1.8" fill="none" stroke="#384152" stroke-width="1.1"/><path d="M0.7 8.6 C0.7 6.4 2 5.4 3.6 5.4 C4.6 5.4 5.4 5.8 5.9 6.4" fill="none" stroke="#384152" stroke-width="1.1"/><path d="M6.2 4.6 L7.4 5.8 L9.2 3.6" fill="none" stroke="#384152" stroke-width="1"/></svg><svg style="left:731.60px;top:87.10px;" width="10.80" height="14.40" viewBox="0 0 10.8 14.4"><path d="M3.2 1 C3.2 0 4.8 0 4.8 1 V5.2 L8.8 6 C9.8 6.2 10 6.8 9.8 7.8 L9.2 11.4 C9 12.8 8.4 13.4 7 13.4 H5 C4 13.4 3.4 13 2.8 12 L0.8 8.6 C0.4 7.8 1.4 7 2.2 7.8 L3.2 9 Z" fill="#fff" stroke="#222" stroke-width="0.9" stroke-linejoin="round"/></svg></div></div><svg style="left:500.00px;top:5.00px;" width="140.00" height="50.00" viewBox="500 5 140 50"><polygon points="509.1,11.6 572.2,27.6 574.7,23.2 633.8,49 569.7,41.6 571.6,35.8 505.8,19.6" fill="#ec1c25"/></svg><svg style="left:995.00px;top:15.00px;" width="13.00" height="13.00" viewBox="0 0 13 13"><path d="M1.6 1.4 L11 11 M11 1.4 L1.6 11" stroke="#fff" stroke-width="1.9" fill="none"/></svg><div style="left:973.00px;top:391.20px;width:45.40px;height:45.20px;background:linear-gradient(135deg,#6ab8ec 0%,#3f97dc 100%);border-radius:14px;"></div><svg style="left:983.00px;top:403.00px;" width="25.00" height="25.00" viewBox="0 0 25 25"><path d="M3.4 2.2 H20.4 C21.8 2.2 22.8 3.2 22.8 4.6 V15.4 C22.8 16.8 21.8 17.8 20.4 17.8 H18.6 V23.4 L12.4 17.8 H3.4 C2 17.8 1 16.8 1 15.4 V4.6 C1 3.2 2 2.2 3.4 2.2 Z" fill="#fff"/><rect x="6.4" y="6" width="11" height="7.4" rx="0.8" fill="#fff" stroke="#59636f" stroke-width="1.7"/></svg></body></html>
